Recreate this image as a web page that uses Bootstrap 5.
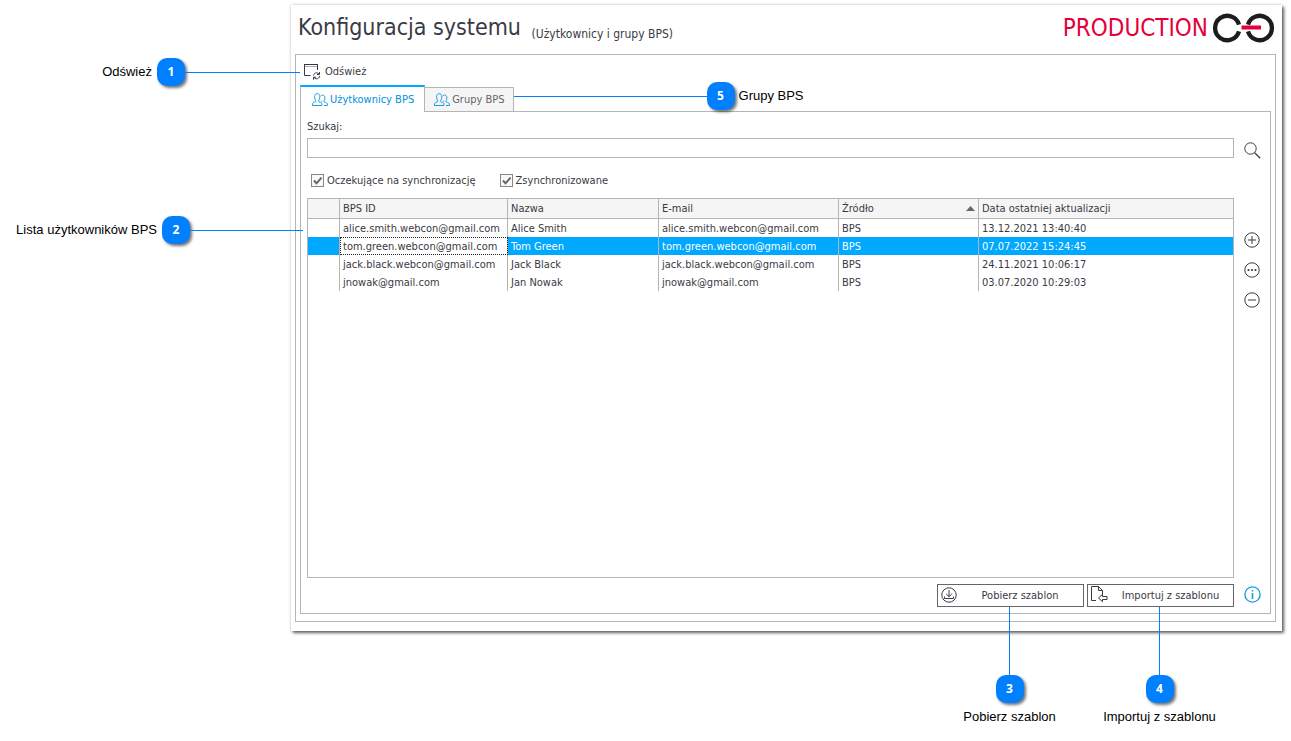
<!DOCTYPE html>
<html lang="pl">
<head>
<meta charset="utf-8">
<meta name="viewport" content="width=device-width, initial-scale=1">
<title>Konfiguracja systemu – Użytkownicy i grupy BPS</title>
<link href="https://cdn.jsdelivr.net/npm/bootstrap@5.3.0/dist/css/bootstrap.min.css" rel="stylesheet">
<style>
  :root { --ink: #3a3a44; --edge: #b5b5b5; --accent: #00a8ff; --mark: #0080ff; }
  body { font: 11px/16px "DejaVu Sans Condensed", "DejaVu Sans", sans-serif; color: var(--ink); background: #fff; }
  .page { padding: 5px 9px 110px 291px; }
  .app-window { background: #fff; padding: 0 6px 9px 4px; box-shadow: 2px 2px 3px rgba(0,0,0,.6), 0 0 3px rgba(0,0,0,.2); }
  .app-head { height: 49px; padding: 0 1px 4px 3px; }
  .app-title { font-size: 23px; line-height: 32px; font-weight: 400; padding-top: 3px; }
  .app-title small { font-size: 12px; position: relative; top: 3px; margin-left: 4px; }
  .env-name { font-size: 24px; line-height: 32px; color: #e4003a; }
  .frame { border: 1px solid var(--edge); padding: 0 4px 7px; }
  .plain { background: none; border: 0; padding: 0; color: inherit; }
  .toolbar-row { height: 30px; padding: 4px 4px 0; }
  .tab-btn { border: 1px solid var(--edge); border-bottom: 0; background: #f5f5f5; color: #666; height: 24px; padding: 0 8px 0 9px; gap: 2px; white-space: nowrap; }
  .tab-btn.active { background: #fff; color: #0090dc; border-top: 2px solid var(--accent); height: 27px; margin-bottom: -1px; padding: 0 10px 0 11px; position: relative; z-index: 1; }
  .tab-item { margin-left: -1px; }
  .pane { border: 1px solid var(--edge); padding: 0 0 6px 6px; display: grid; grid-template-columns: minmax(0, 1fr) 36px; grid-template-rows: 26px 20px 40px 1fr 29px; }
  .search-box { border: 1px solid var(--edge); width: 100%; height: 20px; padding: 0 4px; font: inherit; }
  .filters { padding: 5px 4px 0; gap: 24px; }
  .tick { appearance: none; width: 13px; height: 13px; border: 1px solid #888; margin: 0;
    background: #f8f8f8 url("data:image/svg+xml,%3Csvg xmlns='http://www.w3.org/2000/svg' viewBox='0 0 11 11'%3E%3Cpath d='M2 5.5 4.5 8.3 9.5 2.6' fill='none' stroke='%23666' stroke-width='2'/%3E%3C/svg%3E"); }
  .tick-label { gap: 3px; }
  .grid-box { border: 1px solid var(--edge); }
  .users { table-layout: fixed; width: 100%; border-collapse: separate; border-spacing: 0; }
  .users th, .users td { height: 18px; padding: 2px 3px 0; line-height: 16px; border-right: 1px solid var(--edge); white-space: nowrap; }
  .users th { height: 20px; padding-top: 0; font-weight: 400; background: #f5f5f5; border-bottom: 1px solid var(--edge); }
  .users tr > :last-child { border-right: 0; }
  .users .picked td { background: var(--accent); color: #fff; }
  .users .picked .focus-cell { background: #fff; color: var(--ink); outline: 1px dotted #222; outline-offset: -1px; }
  .c-sel { width: 32px; } .c-id { width: 168px; } .c-name { width: 151px; } .c-mail { width: 180px; } .c-src { width: 140px; }
  .side { padding-top: 34px; gap: 14px; }
  .cmd { border: 1px solid #666; background: #fff; color: var(--ink); width: 147px; height: 23px; padding: 0 0 0 3px; }
  .cmd svg { margin-bottom: 2px; }
  svg { display: block; fill: none; stroke: currentColor; flex: none; }
  .sky { color: #1a9ee0; }
  .callout { position: absolute; font: 13px/16px "Liberation Sans", Arial, sans-serif; color: #000; white-space: nowrap; z-index: 2; }
  .callout .num { width: 28px; height: 28px; border-radius: 10px; background: var(--mark); color: #fff; font: bold 12px/28px "Open Sans", sans-serif; text-align: center; box-shadow: 2px 2px 3px rgba(0,0,0,.55); flex: none; }
  .wire { background: var(--mark); flex: none; }
  .wire-h { height: 1px; }
  .wire-v { width: 1px; height: 68px; }
  .to-refresh { right: 100%; top: 3px; gap: 5px; }
  .to-list { right: calc(100% + 5px); top: 17px; gap: 5px; }
  .to-refresh .wire, .to-list .wire { margin-left: -5px; }
  .to-groups { left: 100%; top: -5px; }
  .to-cmd { left: 0; right: 2px; top: 100%; }
  .to-cmd .num { margin-bottom: 6px; }
</style>
</head>
<body>
<svg width="0" height="0" class="position-absolute" aria-hidden="true">
  <symbol id="people" viewBox="0 0 16 14">
    <path d="M.5 12.500V11c0-1 .8-1.400 3-2.200.5-.3.500-.8.200-1.300C2.900 6.500 2.600 5.200 2.600 3.800 2.600 1.800 3.600.6 5.200.6s2.600 1.200 2.600 3.200c0 1.400-.3 2.700-1.100 3.700-.3.500-.3 1 .2 1.300 2.200.8 3 1.200 3 2.200v1.500z"/>
    <path d="M8.600 3.300c.4-.8 1.100-1.200 2-1.200 1.400 0 2.300 1 2.300 2.700 0 1.200-.3 2.200-.9 3-.3.500-.2.900.2 1.100 2 .7 3.200 1 3.200 2.100v1.500h-3.600M9.300 8.900c.4-.3.300-.7 0-1.200"/>
  </symbol>
</svg>

<div class="page d-flex flex-column min-vh-100">
  <main class="app-window d-flex flex-column flex-grow-1">
    <header class="app-head d-flex align-items-center justify-content-between">
      <h1 class="app-title m-0">Konfiguracja systemu <small>(Użytkownicy i grupy BPS)</small></h1>
      <div class="d-flex align-items-center gap-1">
        <span class="env-name">PRODUCTION</span>
        <svg width="63" height="30" viewBox="0 0 63 30" role="img" aria-label="Logo">
          <g stroke="#1d1d1f" stroke-width="4.300"><path d="M27 11.600A12.200 12.200 0 1 0 27 18.400"/><path d="M36 11.600A12.200 12.200 0 1 1 36 18.400"/></g>
          <path d="M29.500 14.500h19.500" stroke="#e4003a" stroke-width="4"/>
        </svg>
      </div>
    </header>

    <section class="frame d-flex flex-column flex-grow-1">
      <div class="toolbar-row position-relative d-flex align-items-center">
        <button type="button" class="plain d-flex align-items-center gap-1">
          <svg width="17" height="16" viewBox="0 0 17 16" aria-hidden="true"><path d="M.5 0v11.500h6M0 .5h14M13.500 0v6"/><path d="M0 2.500h14" stroke-opacity=".4"/><path d="M9.500 11.500c.3-1.700 1.500-2.700 3-2.700 1.200 0 2 .5 2.700 1.400M15.500 8v2.500H13M15.700 12c-.3 1.700-1.500 2.800-3.100 2.800-1.100 0-2-.5-2.700-1.400M9.500 15.700v-2.500H12"/></svg>
          <span>Odśwież</span>
        </button>
        <div class="callout to-refresh d-flex align-items-center"><span>Odśwież</span><b class="num">1</b><i class="wire wire-h" style="width:115px"></i></div>
      </div>

      <ul class="nav flex-nowrap align-items-end ps-0" role="tablist">
        <li role="presentation"><button type="button" class="tab-btn active d-flex align-items-center" role="tab" aria-selected="true"><svg class="sky" width="16" height="14" aria-hidden="true"><use href="#people"/></svg>Użytkownicy BPS</button></li>
        <li class="tab-item position-relative" role="presentation"><button type="button" class="tab-btn d-flex align-items-center" role="tab" aria-selected="false"><svg class="sky" width="16" height="14" aria-hidden="true"><use href="#people"/></svg>Grupy BPS</button>
          <div class="callout to-groups d-flex align-items-center"><i class="wire wire-h" style="width:193px"></i><b class="num me-1">5</b><span>Grupy BPS</span></div>
        </li>
      </ul>

      <div class="pane flex-grow-1">
        <label for="q" class="align-self-center pt-1">Szukaj:</label><span></span>
        <input id="q" type="text" class="search-box">
        <button type="button" class="plain d-flex justify-content-center pt-1" aria-label="Szukaj"><svg width="17" height="17" viewBox="0 0 17 17"><circle cx="6.500" cy="6.500" r="5.700"/><path d="m10.700 10.700 5.500 5.500" stroke-width="1.300"/></svg></button>
        <div class="filters d-flex align-items-center">
          <label class="tick-label d-flex align-items-center"><input type="checkbox" class="tick" checked>Oczekujące na synchronizację</label>
          <label class="tick-label d-flex align-items-center"><input type="checkbox" class="tick" checked>Zsynchronizowane</label>
        </div><span></span>

        <div class="grid-box position-relative">
          <table class="users">
            <colgroup><col class="c-sel"><col class="c-id"><col class="c-name"><col class="c-mail"><col class="c-src"><col></colgroup>
            <thead><tr><th></th><th>BPS ID</th><th>Nazwa</th><th>E-mail</th><th><span class="d-flex align-items-center justify-content-between">Źródło<svg width="9" height="5" viewBox="0 0 9 5" aria-hidden="true"><path d="M0 5 4.500 0 9 5z" fill="#666" stroke="none"/></svg></span></th><th>Data ostatniej aktualizacji</th></tr></thead>
            <tbody>
              <tr><td></td><td>alice.smith.webcon@gmail.com</td><td>Alice Smith</td><td>alice.smith.webcon@gmail.com</td><td>BPS</td><td>13.12.2021 13:40:40</td></tr>
              <tr class="picked"><td></td><td class="focus-cell">tom.green.webcon@gmail.com</td><td>Tom Green</td><td>tom.green.webcon@gmail.com</td><td>BPS</td><td>07.07.2022 15:24:45</td></tr>
              <tr><td></td><td>jack.black.webcon@gmail.com</td><td>Jack Black</td><td>jack.black.webcon@gmail.com</td><td>BPS</td><td>24.11.2021 10:06:17</td></tr>
              <tr><td></td><td>jnowak@gmail.com</td><td>Jan Nowak</td><td>jnowak@gmail.com</td><td>BPS</td><td>03.07.2020 10:29:03</td></tr>
            </tbody>
          </table>
          <div class="callout to-list d-flex align-items-center"><span>Lista użytkowników BPS</span><b class="num">2</b><i class="wire wire-h" style="width:113px"></i></div>
        </div>
        <div class="side d-flex flex-column align-items-center">
          <button type="button" class="plain" aria-label="Dodaj"><svg width="16" height="16" viewBox="0 0 16 16"><circle cx="8" cy="8" r="7.200"/><path d="M8 4v8M4 8h8"/></svg></button>
          <button type="button" class="plain" aria-label="Edytuj"><svg width="16" height="16" viewBox="0 0 16 16"><circle cx="8" cy="8" r="7.200"/><g fill="currentColor" stroke="none"><circle cx="4.500" cy="8" r="1.100"/><circle cx="8" cy="8" r="1.100"/><circle cx="11.500" cy="8" r="1.100"/></g></svg></button>
          <button type="button" class="plain" aria-label="Usuń"><svg width="16" height="16" viewBox="0 0 16 16"><circle cx="8" cy="8" r="7.200"/><path d="M4 8h8"/></svg></button>
        </div>

        <div class="d-flex justify-content-end align-items-end" style="gap:3px">
          <div class="position-relative">
            <button type="button" class="cmd d-flex align-items-center"><svg width="16" height="16" viewBox="0 0 16 16" aria-hidden="true"><circle cx="8" cy="8" r="7.200"/><path d="M8 3v6.500M5.200 7 8 9.700 10.800 7M3.500 9.500v2h9v-2"/></svg><span class="flex-grow-1 text-center">Pobierz szablon</span></button>
            <div class="callout to-cmd d-flex flex-column align-items-center"><i class="wire wire-v"></i><b class="num">3</b><span>Pobierz szablon</span></div>
          </div>
          <div class="position-relative">
            <button type="button" class="cmd d-flex align-items-center"><svg width="17" height="17" viewBox="0 0 17 17" aria-hidden="true"><path d="M5 14.500H.5V.5h7l4 4v4M7.500.5v4h4M16 10.500h-4.500V8.300L7.500 12l4 3.700v-2.200H16z"/></svg><span class="flex-grow-1 text-center">Importuj z szablonu</span></button>
            <div class="callout to-cmd d-flex flex-column align-items-center"><i class="wire wire-v"></i><b class="num">4</b><span>Importuj z szablonu</span></div>
          </div>
        </div>
        <button type="button" class="plain sky d-flex align-items-end justify-content-center pb-1" aria-label="Informacja"><svg width="17" height="17" viewBox="0 0 17 17" stroke-width="1.400"><circle cx="8.500" cy="8.500" r="7.600"/><path d="M8.500 7v6M8.500 4v1.600" stroke-width="1.600"/></svg></button>
      </div>
    </section>
  </main>
</div>
<script src="https://cdn.jsdelivr.net/npm/bootstrap@5.3.0/dist/js/bootstrap.bundle.min.js"></script>
</body>
</html>
